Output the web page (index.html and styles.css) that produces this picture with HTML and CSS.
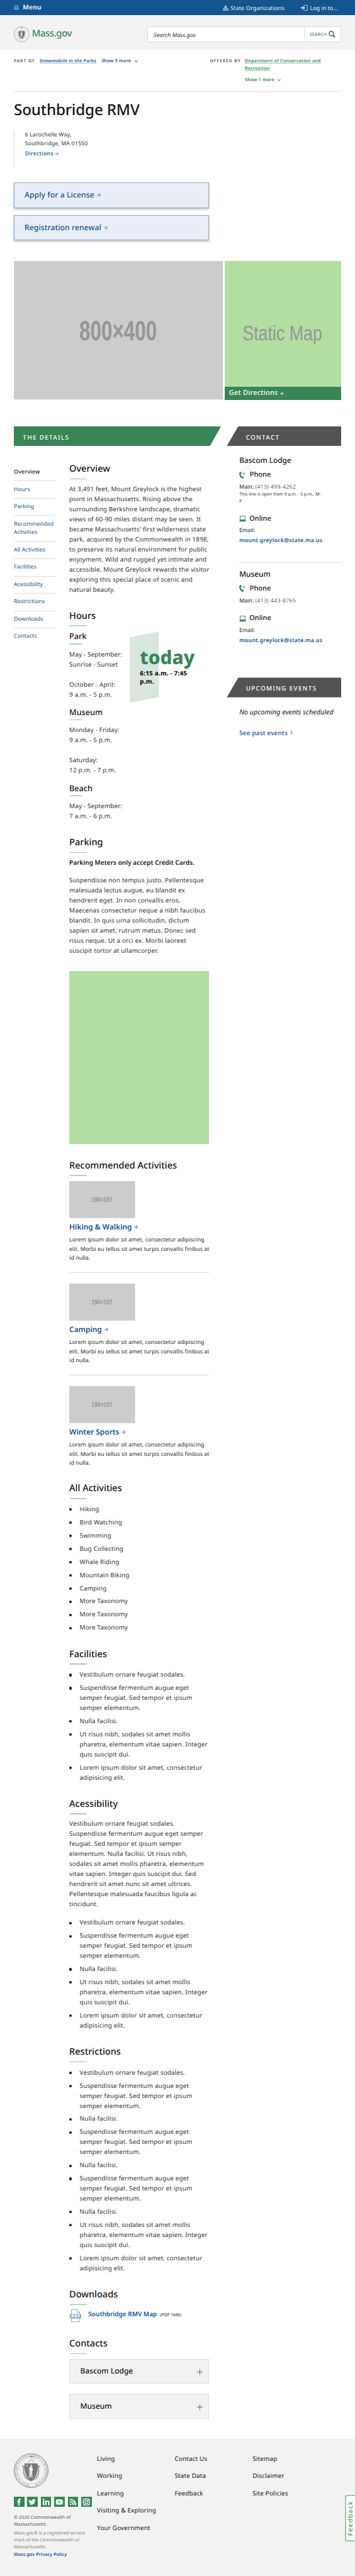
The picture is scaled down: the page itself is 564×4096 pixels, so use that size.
FILE: index.html
```html
<!DOCTYPE html>
<html lang="en">
<head>
<meta charset="utf-8">
<title>Southbridge RMV</title>
<link rel="stylesheet" href="styles.css">
</head>
<body>
<svg class="defs" aria-hidden="true">
  <symbol id="arrow" viewBox="0 0 12 12"><path d="M0 6h9M5.500 1.200 10.300 6 5.500 10.800" fill="none" stroke="currentColor" stroke-width="2.800"/></symbol>
  <symbol id="chev" viewBox="0 0 12 10"><path d="M1.500 1.500 6 7.500 10.500 1.500" fill="none" stroke="currentColor" stroke-width="3.400"/></symbol>
  <symbol id="phone" viewBox="0 0 18 20"><path d="M3.500.4 6.200.8 7 5.400 4.600 6.800C4.800 9.700 6 12 8.200 14.200l2.400-.8 3 3.800-1.800 2C10 20.200 7 19.600 4.300 16.300.2 11.300-.8 4.400 1.200 1.600Z" fill="currentColor"/><path d="M10.500 9.500V7.400M10.300 5.200c2 .2 3.400 1.600 3.400 4.300M11.300 1.600c3.200.5 5.400 3 5.400 7.400" fill="none" stroke="currentColor" stroke-width="1.500"/></symbol>
  <symbol id="laptop" viewBox="0 0 20 18"><path d="M2.800 1h14.400v10.500H2.800Z" fill="none" stroke="currentColor" stroke-width="1.700"/><path d="M2 12.800h16l2 4.200H0Z" fill="currentColor"/></symbol>
  <symbol id="seal" viewBox="0 0 100 100">
    <circle cx="50" cy="50" r="49" fill="none" stroke="#777" stroke-width="1.600"/>
    <circle cx="50" cy="50" r="46.500" fill="none" stroke="#777" stroke-width=".7"/>
    <circle cx="50" cy="50" r="37.500" fill="none" stroke="#999" stroke-width="1" stroke-dasharray="1 1"/>
    <path d="M31 29h38c0 20 0 38-19 51C31 67 31 49 31 29Z" fill="#777"/>
    <path d="M24 37h5v8c-2 12 2 22 10 29l10 5 12-5c8-7 12-17 10-29v-8h5" fill="none" stroke="#777" stroke-width="3.500" stroke-dasharray="3 1"/>
    <path d="M43 27c2-6 5-8 9-10l4 5 2 5M40 9h20" fill="none" stroke="#888" stroke-width="1.500"/>
    <circle cx="50" cy="9" r="2.500" fill="#888"/>
    <circle cx="50" cy="35" r="2.300" fill="#eee"/>
    <path d="M46 38h7l2 11-2 2v9l1 10h-3l-1.500-12L48 70h-3l1-20-2-3ZM38 32l1 2h2l-1.600 1.600.6 2.400-2-1.200-2 1.200.6-2.400L35 34h2Z" fill="#eee"/>
    <path d="M43.500 40v30" stroke="#eee" stroke-width=".8"/>
  </symbol>
</svg>

<div class="topbar">
  <div class="menu"><span class="burger"></span>Menu</div>
  <div class="utility">
    <span class="util"><svg class="i-dome" viewBox="0 0 16 16"><path d="M7.400 0h1.200v2.200c2.200.4 3.400 2 3.400 4.300H4c0-2.300 1.200-3.900 3.400-4.300ZM3.500 7.200h9v2h-9ZM0 9.800h16V16H0Z" fill="currentColor"/><path d="M2.500 11v4M5.500 11v4M8 11v4M10.500 11v4M13.500 11v4" stroke="#14558f" stroke-width="1"/></svg>State Organizations</span>
    <span class="util"><svg class="i-login" viewBox="0 0 20 16"><path d="M8 1h11v14H8" fill="none" stroke="currentColor" stroke-width="1.800"/><path d="M0 5.500h6.500V2L13 8l-6.500 6v-3.500H0Z" fill="currentColor"/></svg>Log in to...</span>
  </div>
</div>

<header class="header">
  <div class="brand"><svg class="seal-sm"><use href="#seal"/></svg><span>Mass.gov</span></div>
  <div class="search"><span class="search-in">Search Mass.gov</span><span class="search-btn">SEARCH<svg class="i-search" viewBox="0 0 20 19"><circle cx="8" cy="8" r="6.300" fill="none" stroke="currentColor" stroke-width="3"/><path d="m12.500 12.500 6 6" stroke="currentColor" stroke-width="3.600"/></svg></span></div>
</header>

<div class="wrap">
  <div class="relations">
    <div class="rel rel-part"><span class="rel-label">PART OF</span><a class="u">Snowmobile in the Parks</a><a class="more">Show 5 more<svg><use href="#chev"/></svg></a></div>
    <div class="rel rel-off"><span class="rel-label">OFFERED BY</span><div class="rel-list"><a class="u">Department of Conservation and<br>Recreation</a><a class="more">Show 1 more<svg><use href="#chev"/></svg></a></div></div>
  </div>
  <h1>Southbridge RMV</h1>
  <div class="address">6 Larochelle Way,<br>Southbridge, MA 01550<a>Directions<svg><use href="#arrow"/></svg></a></div>
  <div class="actions">
    <a>Apply for a License<svg><use href="#arrow"/></svg></a>
    <a>Registration renewal<svg><use href="#arrow"/></svg></a>
  </div>
  <div class="media">
    <svg class="photo" viewBox="0 0 604 400"><rect width="604" height="400" fill="#ccc"/><text x="189" y="229" font-size="80" font-weight="700" textLength="224" lengthAdjust="spacingAndGlyphs">800×400</text></svg>
    <div class="map">
      <svg viewBox="0 0 335 363"><rect width="335" height="364" fill="#b2dea2"/><text x="51" y="229" font-size="60" textLength="230" lengthAdjust="spacingAndGlyphs">Static Map</text></svg>
      <a>Get Directions<svg><use href="#arrow"/></svg></a>
    </div>
  </div>

  <div class="columns">
    <main class="details">
      <div class="banner banner-green">THE DETAILS</div>
      <div class="detail-grid">
        <nav class="toc"><a class="on">Overview</a><a>Hours</a><a>Parking</a><a>Recommended Activities</a><a>All Activities</a><a>Facilities</a><a>Acessibility</a><a>Restrictions</a><a>Downloads</a><a>Contacts</a></nav>
        <div class="sections">
          <section><h2>Overview</h2>
            <p class="intro">At 3,491 feet, Mount Greylock is the highest<br>point in Massachusetts. Rising above the<br>surrounding Berkshire landscape, dramatic<br>views of 60-90 miles distant may be seen. It<br>became Massachusetts' first wilderness state<br>park, acquired by the Commonwealth in 1898,<br>to preserve its natural environment for public<br>enjoyment. Wild and rugged yet intimate and<br>accessible, Mount Greylock rewards the visitor<br>exploring this special place of scenic and<br>natural beauty.</p></section>
          <section><h2>Hours</h2>
            <div class="hours-row">
              <div class="hours-text"><h3>Park</h3><p>May - September:<br>Sunrise - Sunset<br><br>October - April:<br>9 a.m. - 5 p.m.</p></div>
              <div class="today"><b>today</b><span>6:15 a.m. - 7:45<br>p.m.</span></div>
            </div>
            <h3 class="next">Museum</h3><p>Monday - Friday:<br>9 a.m. - 5 p.m.<br><br>Saturday:<br>12 p.m. - 7 p.m.</p>
            <h3 class="next">Beach</h3><p>May - September:<br>7 a.m. - 6 p.m.</p></section>
          <section><h2>Parking</h2>
            <p class="strong">Parking Meters only accept Credit Cards.</p>
            <p>Suspendisse non tempus justo. Pellentesque<br>malesuada lectus augue, eu blandit ex<br>hendrerit eget. In non convallis eros.<br>Maecenas consectetur neque a nibh faucibus<br>blandit. In quis urna sollicitudin, dictum<br>sapien sit amet, rutrum metus. Donec sed<br>risus neque. Ut a orci ex. Morbi laoreet<br>suscipit tortor at ullamcorper.</p></section>
          <div class="greenmap"></div>
          <section><h2>Recommended Activities</h2>
            <div class="cards">
              <article><svg class="thumb" viewBox="0 0 190 107"><rect width="190" height="107" fill="#ccc"/><text x="64" y="60" font-size="19.500" font-weight="700" textLength="61" lengthAdjust="spacingAndGlyphs">190×107</text></svg><a>Hiking &amp; Walking<svg><use href="#arrow"/></svg></a><p>Lorem ipsum dolor sit amet, consectetur adipiscing<br>elit. Morbi eu tellus sit amet turpis convallis finibus at<br>id nulla.</p></article>
              <article><svg class="thumb" viewBox="0 0 190 107"><rect width="190" height="107" fill="#ccc"/><text x="64" y="60" font-size="19.500" font-weight="700" textLength="61" lengthAdjust="spacingAndGlyphs">190×107</text></svg><a>Camping<svg><use href="#arrow"/></svg></a><p>Lorem ipsum dolor sit amet, consectetur adipiscing<br>elit. Morbi eu tellus sit amet turpis convallis finibus at<br>id nulla.</p></article>
              <article><svg class="thumb" viewBox="0 0 190 107"><rect width="190" height="107" fill="#ccc"/><text x="64" y="60" font-size="19.500" font-weight="700" textLength="61" lengthAdjust="spacingAndGlyphs">190×107</text></svg><a>Winter Sports<svg><use href="#arrow"/></svg></a><p>Lorem ipsum dolor sit amet, consectetur adipiscing<br>elit. Morbi eu tellus sit amet turpis convallis finibus at<br>id nulla.</p></article>
            </div></section>
          <section><h2>All Activities</h2>
            <ul><li>Hiking</li><li>Bird Watching</li><li>Swimming</li><li>Bug Collecting</li><li>Whale Riding</li><li>Mountain Biking</li><li>Camping</li><li>More Taxonomy</li><li>More Taxonomy</li><li>More Taxonomy</li></ul></section>
          <section><h2>Facilities</h2>
            <ul><li>Vestibulum ornare feugiat sodales.</li><li>Suspendisse fermentum augue eget<br>semper feugiat. Sed tempor et ipsum<br>semper elementum.</li><li>Nulla facilisi.</li><li>Ut risus nibh, sodales sit amet mollis<br>pharetra, elementum vitae sapien. Integer<br>quis suscipit dui.</li><li>Lorem ipsum dolor sit amet, consectetur<br>adipisicing elit.</li></ul></section>
          <section><h2>Acessibility</h2>
            <p>Vestibulum ornare feugiat sodales.<br>Suspendisse fermentum augue eget semper<br>feugiat. Sed tempor et ipsum semper<br>elementum. Nulla facilisi. Ut risus nibh,<br>sodales sit amet mollis pharetra, elementum<br>vitae sapien. Integer quis suscipit dui. Sed<br>hendrerit sit amet nunc sit amet ultrices.<br>Pellentesque malesuada faucibus ligula ac<br>tincidunt.</p>
            <ul class="after-p"><li>Vestibulum ornare feugiat sodales.</li><li>Suspendisse fermentum augue eget<br>semper feugiat. Sed tempor et ipsum<br>semper elementum.</li><li>Nulla facilisi.</li><li>Ut risus nibh, sodales sit amet mollis<br>pharetra, elementum vitae sapien. Integer<br>quis suscipit dui.</li><li>Lorem ipsum dolor sit amet, consectetur<br>adipisicing elit.</li></ul></section>
          <section><h2>Restrictions</h2>
            <ul><li>Vestibulum ornare feugiat sodales.</li><li>Suspendisse fermentum augue eget<br>semper feugiat. Sed tempor et ipsum<br>semper elementum.</li><li>Nulla facilisi.</li><li>Suspendisse fermentum augue eget<br>semper feugiat. Sed tempor et ipsum<br>semper elementum.</li><li>Nulla facilisi.</li><li>Suspendisse fermentum augue eget<br>semper feugiat. Sed tempor et ipsum<br>semper elementum.</li><li>Nulla facilisi.</li><li>Ut risus nibh, sodales sit amet mollis<br>pharetra, elementum vitae sapien. Integer<br>quis suscipit dui.</li><li>Lorem ipsum dolor sit amet, consectetur<br>adipisicing elit.</li></ul></section>
          <section><h2>Downloads</h2>
            <div class="download"><svg class="i-pdf" viewBox="0 0 33 37"><path d="M4.700 13V1h17l6.600 7v5M4.700 26v10h23.600V26M21 1v8h7" fill="none" stroke="#8aaacb" stroke-width="1.700"/><rect y="13.500" width="33" height="13" fill="#8aaacb"/><text x="4" y="24.200" font-size="11.500" font-weight="900" textLength="25">PDF</text></svg><a>Southbridge RMV Map</a><small>(PDF 1MB)</small></div></section>
          <section><h2>Contacts</h2>
            <div class="accordions"><div>Bascom Lodge<i></i></div><div>Museum<i></i></div></div></section>
        </div>
      </div>
    </main>

    <aside class="side">
      <div class="banner banner-gray">CONTACT</div>
      <div class="contact">
        <h4>Bascom Lodge</h4>
        <h5 class="ph"><svg><use href="#phone"/></svg>Phone</h5>
        <p>Main: <span class="num">(413) 499-4262</span></p>
        <p class="note">This line is open from 9 a.m. - 5 p.m., M-<br>F</p>
        <h5 class="on1"><svg><use href="#laptop"/></svg>Online</h5>
        <p>Email:<br><a>mount.greylock@state.ma.us</a></p>
      </div>
      <div class="contact second">
        <h4>Museum</h4>
        <h5 class="ph"><svg><use href="#phone"/></svg>Phone</h5>
        <p>Main: <span class="num">(413) 443-8765</span></p>
        <h5 class="on2"><svg><use href="#laptop"/></svg>Online</h5>
        <p>Email:<br><a>mount.greylock@state.ma.us</a></p>
      </div>
      <div class="banner banner-gray events">UPCOMING EVENTS</div>
      <div class="event-body"><p><em>No upcoming events scheduled</em></p><a>See past events<svg viewBox="0 0 8 11"><path d="M1.500 1 6 5.500 1.500 10" fill="none" stroke="currentColor" stroke-width="3"/></svg></a></div>
    </aside>
  </div>
</div>

<footer class="footer">
  <div class="foot-brand">
    <svg class="seal-lg" viewBox="0 0 100 100"><use href="#seal"/><path id="ring" d="M46 89.500A39.700 39.700 0 1 1 54 89.500" fill="none"/><text class="seal-text"><textPath href="#ring" startOffset="2" textLength="232">MASSACHUSETTENSIS  ·  SIGILLUM REIPUBLICÆ</textPath></text></svg>
    <div class="social">
      <svg viewBox="0 0 30 30"><path d="M12.400 25V16H9.500v-4h2.900V9.500C12.400 6.500 14 5 16.700 5h3v4h-1.800c-1.200 0-1.400.6-1.400 1.500V12h3.200l-.4 4h-2.800v9Z"/></svg>
      <svg viewBox="0 0 30 30"><path d="M5 21c2.500 0 4.200-.6 5.500-1.600-1.800-.2-3-1.300-3.600-2.700h1.700c-2-.7-3-2.200-3-4.200l1.700.5C5.600 11.600 5.200 9.800 6.200 7.800c2.200 2.600 5 4 8.400 4.200C14.200 9 16 7 18.700 7c1.200 0 2.200.5 3 1.300l2.600-1-1.700 2.300 2.300-.6-2 2.200C23 18 18.500 23 12 23c-2.600 0-5-.8-7-2Z"/></svg>
      <svg viewBox="0 0 30 30"><path d="M5.500 11h4v13.500h-4ZM5.300 7.200a2.200 2.200 0 1 1 4.400 0 2.200 2.200 0 0 1-4.400 0ZM12 11h3.800v1.900c.8-1.400 2.200-2.200 4-2.200 4 0 5 2.500 5 6.300v7.500h-4v-7c0-2-.4-3.200-2.200-3.200-2 0-2.600 1.400-2.600 3.200v7h-4Z"/></svg>
      <svg viewBox="0 0 30 30"><rect x="5" y="7.500" width="20" height="15" rx="4"/><path d="M12.800 11.500v7l6-3.500Z" class="g"/></svg>
      <svg viewBox="0 0 30 30"><circle cx="7.500" cy="22" r="2.500"/><path d="M5 13.800c6 0 10.500 4.500 10.500 10.500M5 7.500c9.500 0 17 7 17 17" class="s"/></svg>
      <svg viewBox="0 0 30 30"><rect x="6" y="6" width="18" height="18" rx="5" class="l"/><circle cx="15" cy="15" r="4.500" class="l"/><circle cx="20" cy="10" r="1.300"/></svg>
    </div>
    <p class="copy">© 2020 Commonwealth of<br>Massachusetts.</p>
    <p class="legal">Mass.gov® is a registered service<br>mark of the Commonwealth of<br>Massachusetts.</p>
    <a class="privacy">Mass.gov Privacy Policy</a>
  </div>
  <div class="links"><a>Living</a><a>Working</a><a>Learning</a><a>Visiting &amp; Exploring</a><a>Your Government</a></div>
  <div class="links"><a>Contact Us</a><a>State Data</a><a>Feedback</a></div>
  <div class="links"><a>Sitemap</a><a>Disclaimer</a><a>Site Policies</a></div>
  <div class="feedback"><span>Feedback</span></div>
</footer>
</body>
</html>
```
FILE: styles.css
```css
html { font-size: 5.504px; }
* { box-sizing: border-box; }
body {
  margin: 0;
  background: #fff;
  color: #141414;
  font-family: "Noto Sans", "Open Sans", sans-serif;
  font-size: 1.8rem;
  font-weight: 400;
  line-height: 2.9rem;
  overflow-x: hidden;
  white-space: nowrap;
  text-rendering: geometricPrecision;
}
h1, h2, h3, h4, h5, p, ul { margin: 0; padding: 0; }
svg { display: block; flex: none; }
svg text { font-family: "Liberation Sans", Arial, sans-serif; fill: #969696; }
.defs { position: absolute; width: 0; height: 0; }
a { color: #14558f; }

/* top bar */
.topbar {
  height: 4.4rem;
  padding: 0 5rem 0 4rem;
  display: flex;
  justify-content: space-between;
  align-items: center;
  background: #14558f;
  color: #fff;
}
.menu { display: flex; align-items: center; gap: 1.1rem; font-weight: 600; font-size: 1.85rem; letter-spacing: .05rem; }
.burger { width: 1.5rem; height: 1.2rem; border: solid #b9cce0; border-width: .2rem 0; background: linear-gradient(#b9cce0, #b9cce0) center / 100% .2rem no-repeat; }
.utility { display: flex; gap: 4.8rem; font-size: 1.63rem; color: #eef3f8; }
.util { display: flex; align-items: center; gap: .55rem; padding-top: .2rem; }
.util:first-child { letter-spacing: .03rem; }
.util svg { color: #b9cce0; }
.i-dome { width: 1.6rem; height: 1.6rem; }
.i-login { width: 2rem; height: 1.6rem; }

/* header */
.header {
  height: 9.9rem;
  padding: 3.2rem 4rem 0;
  display: flex;
  justify-content: space-between;
  background: #f2f2f2;
}
.brand { display: flex; align-items: center; gap: .7rem; height: 4.6rem; color: #388557; font-size: 2.7rem; font-weight: 500; letter-spacing: -.07rem; }
.seal-sm { width: 4.5rem; height: 4.5rem; }
.search { width: 56rem; height: 4.6rem; display: flex; background: #fff; border: .2rem solid #dcdcdc; font-size: 1.65rem; line-height: 4.6rem; }
.search-in { flex: 1; padding-left: 1.7rem; font-style: italic; color: #333; }
.search-btn { width: 10.5rem; border-left: .2rem solid #dcdcdc; padding-left: 1.4rem; display: flex; align-items: center; gap: .4rem; color: #388557; font-size: 1.2rem; font-weight: 500; letter-spacing: .08rem; }
.i-search { width: 2rem; height: 1.9rem; }

.wrap { padding: 0 4rem; }

/* relations */
.relations { height: 12.3rem; padding-top: 2.3rem; display: flex; border-bottom: 1px solid #dcdcdc; font-size: 1.3rem; line-height: 2.2rem; font-weight: 600; letter-spacing: .035rem; }
.rel { display: flex; align-items: flex-start; }
.rel-part { width: 56.6rem; }
.rel-label { color: #535353; font-size: 1.2rem; letter-spacing: .19rem; margin-top: -.1rem; }
.rel-part .rel-label { width: 7.4rem; }
.rel-off .rel-label { width: 10.1rem; }
.rel-part .more { margin-left: 1.5rem; }
.rel-off a { color: #388557; }
.rel-list .more { margin-top: 1rem; }
.u { text-decoration: underline; text-decoration-color: #a7c4da; text-decoration-thickness: 1px; text-underline-offset: .25rem; }
.rel-off .u { text-decoration-color: #9bc6ab; }
.more { display: flex; align-items: center; gap: .8rem; }
.more svg { width: 1.2rem; height: .9rem; color: #8aaac7; }
.rel-off .more svg { color: #9bc6ab; }

h1 { margin-top: 2.4rem; font-size: 4.4rem; line-height: 5.4rem; font-weight: 500; letter-spacing: -.03rem; }
.address { margin-top: 3.4rem; height: 10.4rem; padding-left: 3rem; border-left: 1px solid #dcdcdc; font-size: 1.6rem; line-height: 2.5rem; letter-spacing: .025rem; color: #333; }
.address a { display: flex; align-items: center; gap: .5rem; margin-top: .4rem; font-weight: 500; letter-spacing: .05rem; }
.address svg { width: .95rem; height: .95rem; color: #8aaac7; }

.actions { margin-top: 4.5rem; width: 56.4rem; display: flex; flex-direction: column; gap: 2rem; }
.actions a { height: 7.4rem; padding-left: 2.9rem; display: flex; align-items: center; gap: .7rem; background: #e8eef5; border: .35rem solid #8aaacb; box-shadow: 0 .3rem .7rem rgba(0, 0, 0, .25); font-size: 2.2rem; font-weight: 500; letter-spacing: .02rem; }
.actions svg { width: 1.2rem; height: 1.2rem; color: #8aaac7; }

.media { margin-top: 6rem; height: 40rem; display: flex; gap: .5rem; }
.photo { width: 60.4rem; height: 40rem; }
.map { flex: 1; display: flex; flex-direction: column; }
.map > svg { width: 100%; height: 36.3rem; background: #b2dea2; }
.map a { height: 3.7rem; padding-left: 1.2rem; display: flex; align-items: center; gap: .6rem; background: #388557; color: #fff; font-size: 2rem; font-weight: 500; letter-spacing: .04rem; }
.map a svg { width: 1rem; height: 1rem; margin-top: .3rem; color: #c3dccd; }

/* two-column body */
.columns { margin-top: 7.7rem; display: flex; justify-content: space-between; }
.details { width: 59.8rem; }
.banner { height: 5.7rem; padding-top: .5rem; line-height: 5.2rem; color: #fff; font-weight: 500; font-size: 1.8rem; letter-spacing: .24rem; }
.banner-green { padding-left: 2.6rem; background: #388557; clip-path: polygon(0 0, 100% 0, calc(100% - 3.2rem) 100%, 0 100%); }
.banner-gray { padding-left: 5.5rem; background: #535353; clip-path: polygon(3.3rem 0, 100% 0, 100% 100%, 0 100%); }
.detail-grid { display: grid; grid-template-columns: 12rem 40.4rem; column-gap: 4rem; padding-top: 4.9rem; }

.toc { display: flex; flex-direction: column; padding-top: .2rem; font-size: 1.6rem; line-height: 2.5rem; letter-spacing: .01rem; white-space: normal; }
.toc a { padding: 1.2rem 0; border-bottom: 1px solid #dcdcdc; margin-bottom: calc(.1rem - 1px); }
.toc a:last-child { border: 0; }
.toc .on { color: #141414; font-weight: 500; letter-spacing: .05rem; }

section { margin-bottom: 4.4rem; }
h2 { font-size: 2.64rem; line-height: 3.4rem; font-weight: 500; margin-bottom: 1.35rem; }
h3 { font-size: 2.3rem; line-height: 3rem; font-weight: 500; margin-bottom: 1.45rem; }
h3.next { margin-top: 2.1rem; }
h2::after, h3::after { content: ""; display: block; height: .3rem; margin-left: .1rem; background: #9bc6ab; clip-path: polygon(.15rem 0, 100% 0, calc(100% - .15rem) 100%, 0 100%); }
h2::after { width: 5rem; margin-top: 1.05rem; }
h3::after { width: 3.6rem; margin-top: .6rem; }
.sections p, li { letter-spacing: .029rem; color: #333; }
.sections .intro { letter-spacing: .033rem; }
.sections .strong { color: #141414; font-weight: 600; letter-spacing: .015rem; margin-bottom: 2.3rem; }

.hours-row { display: flex; margin-bottom: -.1rem; }
.hours-text { width: 17.4rem; }
.today { position: relative; width: 22rem; height: 20.5rem; margin: .2rem 0 -.8rem; padding: 4.9rem 0 0 3rem; font-size: 1.8rem; line-height: 2.35rem; font-weight: 800; letter-spacing: .03rem; display: flex; flex-direction: column; gap: 1rem; isolation: isolate; }
.today::before { content: ""; position: absolute; z-index: -1; left: 0; top: 0; width: 8.5rem; height: 20.5rem; background: #d7e7dd; clip-path: polygon(0 1.6rem, 100% 0, 100% 18.9rem, 0 100%); }
.today b { color: #388557; font-size: 5.43rem; line-height: 5rem; font-weight: 800; letter-spacing: 0; }

.greenmap { width: 40.4rem; height: 50rem; background: #b2dea2; margin-bottom: 4.4rem; }

.cards { display: flex; flex-direction: column; padding-top: .15rem; }
article { height: 26.6rem; border-bottom: 1px solid #dcdcdc; margin-bottom: 3rem; }
article:last-child { height: auto; border: 0; margin-bottom: 0; }
.thumb { width: 19rem; height: 10.7rem; }
article a { display: flex; align-items: center; gap: .7rem; margin-top: 1.3rem; font-size: 2.16rem; line-height: 2.8rem; font-weight: 600; }
article a svg { width: 1.2rem; height: 1.2rem; color: #8aaac7; }
.sections article p { margin-top: .9rem; font-size: 1.61rem; line-height: 2.6rem; letter-spacing: .004rem; color: #2a2a2a; }

ul { list-style: none; padding-top: .2rem; display: flex; flex-direction: column; gap: .9rem; }
ul.after-p { padding-top: 2.4rem; }
li { position: relative; padding-left: 3rem; }
li::before { content: ""; position: absolute; left: 0; top: 1.15rem; width: .75rem; height: .75rem; border-radius: 50%; background: #141414; }

.download { height: 3.7rem; display: flex; align-items: baseline; }
.i-pdf { width: 3.3rem; height: 3.7rem; margin: 0 2.1rem 0 .1rem; align-self: flex-start; }
.i-pdf text { fill: #fff; font-family: "Noto Sans", sans-serif; }
.download a { font-size: 1.82rem; font-weight: 600; }
.download small { margin-left: 1rem; font-size: 1.24rem; }

.accordions { display: flex; flex-direction: column; gap: 3rem; }
.accordions div { height: 7.15rem; padding: 0 1.7rem 0 3rem; display: flex; align-items: center; justify-content: space-between; background: #f2f2f2; border: .2rem solid #dcdcdc; font-size: 2.18rem; font-weight: 500; }
.accordions i { width: 1.6rem; height: 1.6rem; margin-top: .4rem; background: linear-gradient(#388557, #388557) center / 100% 1px no-repeat, linear-gradient(#388557, #388557) center / 1px 100% no-repeat; }

/* sidebar */
.side { width: 33rem; font-size: 1.6rem; }
.contact { margin-left: 3.6rem; padding-top: 2.9rem; }
.contact a { font-weight: 600; letter-spacing: .045rem; }
h4 { font-size: 2.15rem; line-height: 2.8rem; font-weight: 500; }
h5 { display: flex; align-items: center; margin-bottom: .8rem; font-size: 2rem; line-height: 2.6rem; font-weight: 500; }
h5 svg { height: 2rem; color: #388557; }
.ph { margin-top: 1.4rem; }
.ph svg { width: 1.8rem; margin-right: 1.2rem; }
.on1 svg, .on2 svg { width: 2rem; height: 1.8rem; margin-right: .9rem; }
.on1 { margin-top: 2.65rem; }
.on2 { margin-top: 2.35rem; }
.num { font-weight: 300; letter-spacing: .06rem; }
.contact .note { margin-top: -.15rem; font-size: 1.26rem; line-height: 1.9rem; color: #333; }
.second { margin-top: 4.7rem; padding-top: 2rem; border-top: 1px solid #dcdcdc; }
.second .ph { margin-top: 1.3rem; }
.events { margin-top: 9.15rem; }
.event-body { margin-left: 3.6rem; padding-top: 3rem; }
.event-body em { display: block; font-size: 1.98rem; line-height: 3rem; }
.event-body a { margin-top: 3rem; display: flex; gap: .7rem; align-items: center; font-size: 1.8rem; font-weight: 500; letter-spacing: .04rem; }
.event-body svg { width: .8rem; height: 1.1rem; margin-top: -.4rem; color: #8aaac7; }

/* footer */
.footer { position: relative; height: 39.8rem; margin-top: 1.45rem; padding: 4.1rem 4rem 0; display: grid; grid-template-columns: 24rem 22.4rem 22.5rem 1fr; background: #f2f2f2; }
.seal-lg { width: 10rem; height: 10rem; }
.seal-lg .seal-text { font-family: "Liberation Serif", serif; font-size: 8px; fill: #666; }
.social { display: flex; gap: .9rem; margin-top: 2.6rem; }
.social svg { width: 3rem; height: 3rem; background: #388557; fill: #fff; }
.social .g { fill: #388557; }
.social .s { fill: none; stroke: #fff; stroke-width: 3.5; }
.social .l { fill: none; stroke: #fff; stroke-width: 2.2; }
.copy, .legal, .privacy { font-size: 1.3rem; line-height: 2rem; }
.copy { margin-top: 2.2rem; color: #535353; letter-spacing: .02rem; }
.legal { margin-top: .4rem; color: #858585; letter-spacing: .007rem; }
.privacy { display: block; margin-top: .3rem; font-weight: 600; letter-spacing: .02rem; }
.links { display: flex; flex-direction: column; gap: 2rem; line-height: 3rem; font-size: 1.8rem; letter-spacing: .03rem; }
.links a { color: #141414; }
.feedback { position: absolute; right: 0; top: 16.2rem; width: 3rem; height: 13.4rem; border: .4rem solid #9bc6ab; border-right: 0; border-radius: .6rem 0 0 .6rem; background: #fff; display: flex; align-items: center; justify-content: center; }
.feedback span { writing-mode: vertical-rl; transform: rotate(180deg); font-size: 1.85rem; line-height: 2.4rem; color: #388557; letter-spacing: .25rem; }
```
